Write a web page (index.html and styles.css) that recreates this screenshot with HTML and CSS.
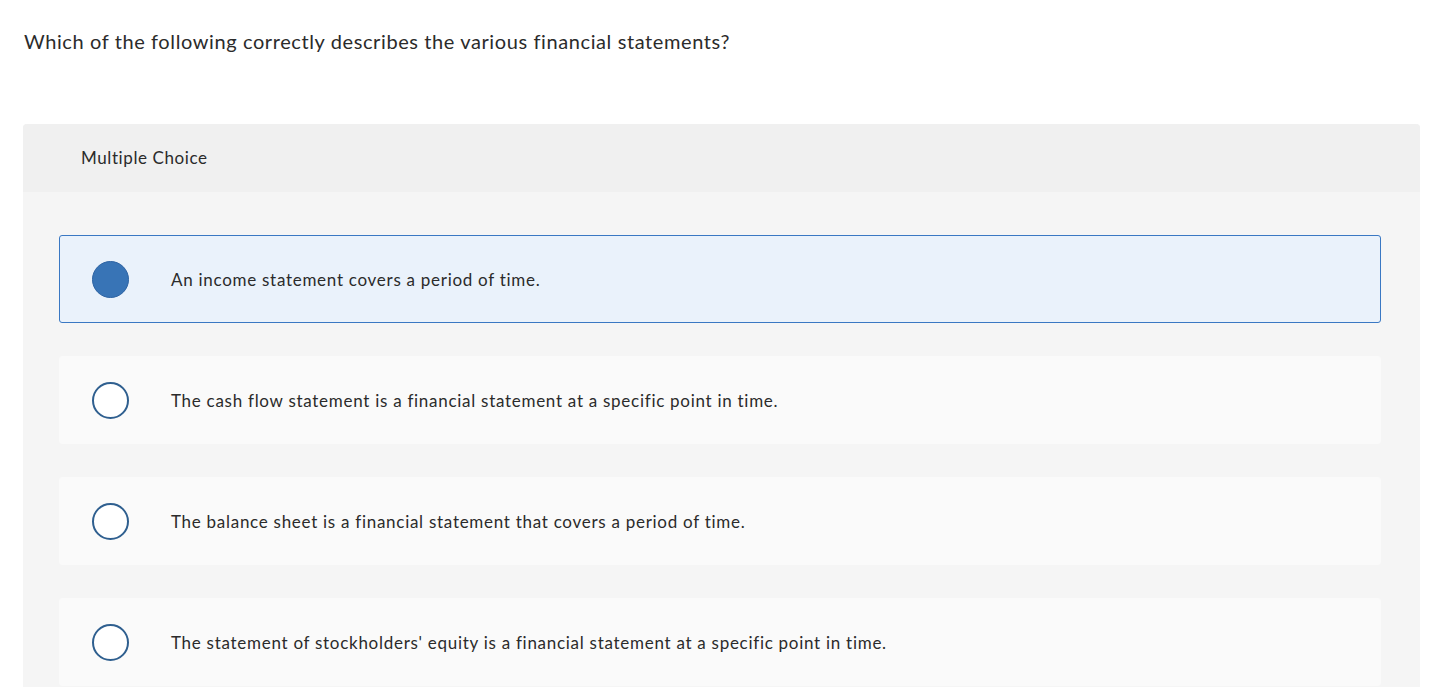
FILE: index.html
```html
<!DOCTYPE html>
<html>
<head>
<meta charset="utf-8">
<link rel="stylesheet" href="styles.css">
</head>
<body>
<div class="page">
  <p class="question">Which of the following correctly describes the various financial statements?</p>
  <section class="panel">
    <div class="panel-head">Multiple Choice</div>
    <div class="panel-body">
      <div class="option selected">
        <span class="radio"></span>
        <span class="label">An income statement covers a period of time.</span>
      </div>
      <div class="option">
        <span class="radio"></span>
        <span class="label">The cash flow statement is a financial statement at a specific point in time.</span>
      </div>
      <div class="option">
        <span class="radio"></span>
        <span class="label">The balance sheet is a financial statement that covers a period of time.</span>
      </div>
      <div class="option">
        <span class="radio"></span>
        <span class="label">The statement of stockholders' equity is a financial statement at a specific point in time.</span>
      </div>
    </div>
  </section>
</div>
</body>
</html>
```
FILE: styles.css
```css
html, body {
  margin: 0;
  padding: 0;
  background: #ffffff;
}
body {
  font-family: Lato, "Open Sans", sans-serif;
  font-variant-ligatures: none;
  color: #2b2b2b;
  overflow: hidden;
}
.page {
  padding: 0 29px 0 23px;
}
.question {
  margin: 0;
  padding: 28px 0 0 1px;
  font-size: 20px;
  line-height: 26px;
  letter-spacing: 0.6px;
  height: 124px;
  box-sizing: border-box;
}
.panel {
  border-radius: 4px 4px 0 0;
  overflow: hidden;
  background: #f5f5f5;
}
.panel-head {
  background: #f0f0f0;
  height: 68px;
  box-sizing: border-box;
  padding: 23px 0 0 58px;
  font-size: 17px;
  line-height: 22px;
  letter-spacing: 0.6px;
}
.panel-body {
  padding: 43px 39px 20px 36px;
  display: flex;
  flex-direction: column;
  gap: 33px;
}
.option {
  height: 88px;
  box-sizing: border-box;
  background: #fafafa;
  border: 1px solid #fafafa;
  border-radius: 3px;
  display: flex;
  align-items: center;
  padding-left: 32px;
}
.option.selected {
  background: #eaf2fb;
  border-color: #3a78c3;
}
.radio {
  width: 37px;
  height: 37px;
  box-sizing: border-box;
  border-radius: 50%;
  border: 2px solid #2f5f8f;
  background: #ffffff;
  flex: none;
}
.selected .radio {
  background: #3874b6;
  border: 1px solid #2d63a3;
}
.label {
  margin-left: 42px;
  font-size: 17px;
  line-height: 22px;
  letter-spacing: 0.72px;
  padding-top: 2px;
}
```
